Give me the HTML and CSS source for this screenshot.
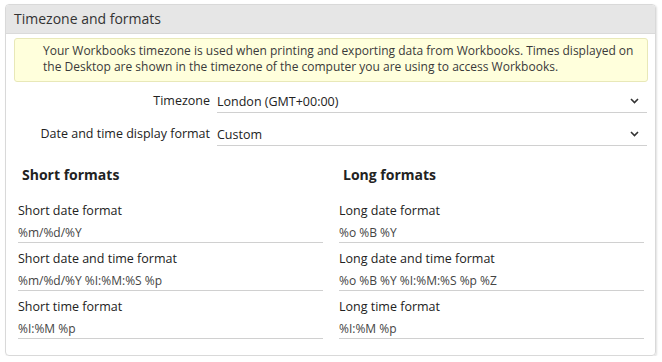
FILE: index.html
```html
<!DOCTYPE html>
<html>
<head>
<meta charset="utf-8">
<link rel="stylesheet" href="styles.css">
</head>
<body>
<div class="panel">
  <div class="panel-head">Timezone and formats</div>
  <div class="notice">Your Workbooks timezone is used when printing and exporting data from Workbooks. Times displayed on the Desktop are shown in the timezone of the computer you are using to access Workbooks.</div>
  <div class="form">
    <div class="row">
      <div class="label">Timezone</div>
      <div class="select"><span>London (GMT+00:00)</span>
        <svg class="chev" width="9" height="6" viewBox="0 0 9 6"><path d="M1 1l3.5 3.5L8 1" fill="none" stroke="#333" stroke-width="1.6"/></svg>
      </div>
    </div>
    <div class="row">
      <div class="label">Date and time display format</div>
      <div class="select"><span>Custom</span>
        <svg class="chev" width="9" height="6" viewBox="0 0 9 6"><path d="M1 1l3.5 3.5L8 1" fill="none" stroke="#333" stroke-width="1.6"/></svg>
      </div>
    </div>
  </div>
  <div class="cols">
    <div class="col">
      <h3>Short formats</h3>
      <div class="field"><div class="flabel">Short date format</div><div class="fval">%m/%d/%Y</div></div>
      <div class="field"><div class="flabel">Short date and time format</div><div class="fval">%m/%d/%Y %I:%M:%S %p</div></div>
      <div class="field"><div class="flabel">Short time format</div><div class="fval">%I:%M %p</div></div>
    </div>
    <div class="col">
      <h3>Long formats</h3>
      <div class="field"><div class="flabel">Long date format</div><div class="fval">%o %B %Y</div></div>
      <div class="field"><div class="flabel">Long date and time format</div><div class="fval">%o %B %Y %I:%M:%S %p %Z</div></div>
      <div class="field"><div class="flabel">Long time format</div><div class="fval">%I:%M %p</div></div>
    </div>
  </div>
</div>
</body>
</html>
```
FILE: styles.css
```css
html, body { margin: 0; padding: 0; background: #fff; }
body { font-family: "Open Sans", "Noto Sans", sans-serif; font-size: 12px; color: #333; }
.panel {
  margin: 4px 5px 0 5px;
  width: 651px;
  height: 352px;
  border: 1px solid #d9d9d9;
  border-radius: 4px;
  box-shadow: 1px 1px 2px rgba(0,0,0,0.12);
  box-sizing: border-box;
  overflow: hidden;
}
.panel-head {
  height: 29px;
  background: #e6e6e6;
  border-bottom: 1px solid #dadada;
  box-sizing: border-box;
  padding-left: 8px;
  font-size: 14px;
  line-height: 28px;
  color: #333;
}
.notice {
  margin: 4px 7px 0 8px;
  height: 44px;
  box-sizing: border-box;
  background: #ffffdc;
  border: 1px solid #e8e8b8;
  border-radius: 3px;
  padding: 4px 12px 0 28px;
  line-height: 16px;
  color: #3a3a3a;
}
.form { margin: 0 8px 0 8px; padding-top: 8px; }
.row { display: flex; align-items: stretch; height: 33px; }
.label {
  width: 196px;
  text-align: right;
  padding-right: 7px;
  line-height: 21px;
  font-size: 12.5px;
  color: #222;
}
.select {
  flex: 1;
  display: flex;
  justify-content: space-between;
  align-items: center;
  height: 22px;
  border-bottom: 1px solid #d0d0d0;
  padding: 0 8px 0 0;
  font-size: 12.5px;
  color: #222;
}
.chev { display: block; margin-top: -1px; }
.cols { display: flex; gap: 16px; margin: 0 11px 0 12px; padding-top: 9px; }
.col { flex: 1; }
.col h3 {
  margin: 0 0 0 4px;
  font-size: 14px;
  font-weight: 700;
  line-height: 20px;
  height: 30px;
  color: #222;
}
.field {
  height: 48px;
  box-sizing: border-box;
  border-bottom: 1px solid #d0d0d0;
  padding-top: 5px;
}
.flabel { line-height: 22px; font-size: 12.5px; color: #222; }
.fval { font-size: 12px; line-height: 21px; color: #444; }
```
